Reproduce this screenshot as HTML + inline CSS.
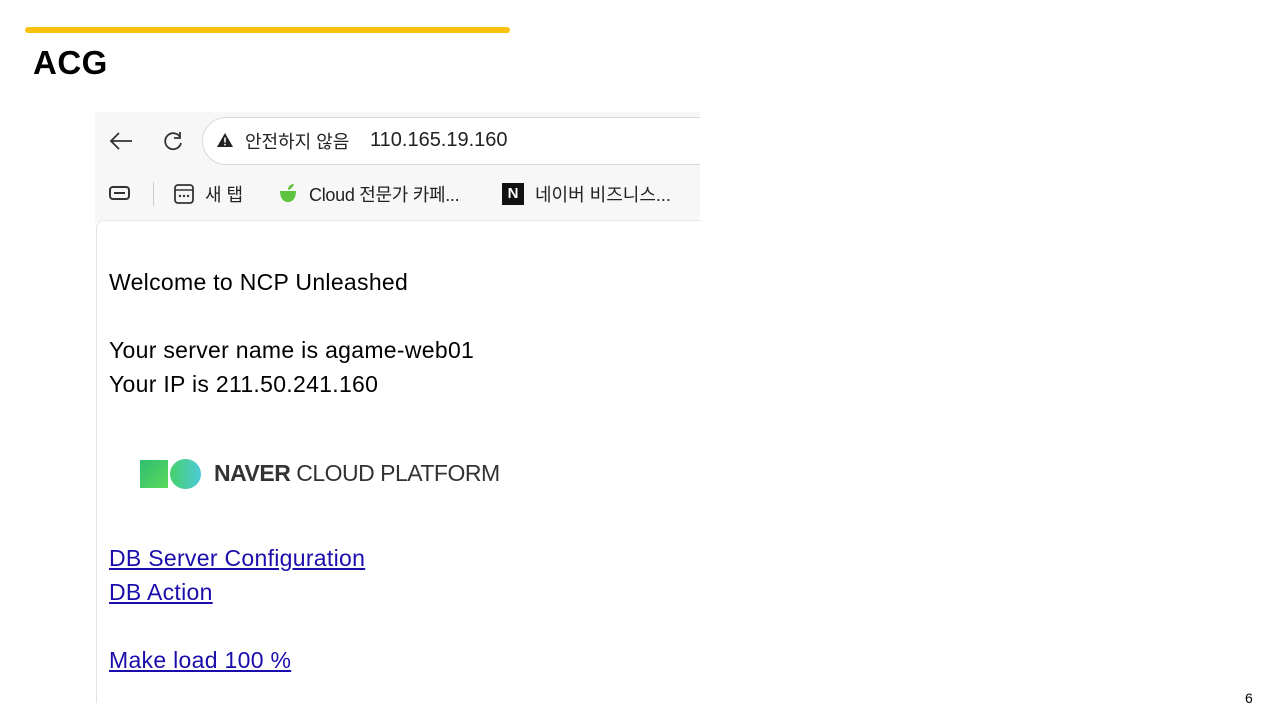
<!DOCTYPE html>
<html><head><meta charset="utf-8"><style>
body{margin:0;width:1280px;height:720px;background:#fff;position:relative;overflow:hidden;font-family:"Liberation Sans","Noto Sans CJK KR",sans-serif;}
.a{position:absolute;}
.t{font-size:23px;letter-spacing:0.3px;color:#000;white-space:nowrap;}
a{color:#1a0dab;text-decoration:underline;}
</style></head><body>
<div class="a" style="left:25px;top:27px;width:485px;height:6px;background:#f9c20f;border-radius:3px"></div>
<div class="a" style="left:33px;top:44px;font-size:33px;font-weight:bold;letter-spacing:0.5px">ACG</div>

<div class="a" style="left:95px;top:112px;width:605px;height:110px;background:#f7f7f7;overflow:hidden">
<div class="a" style="left:107px;top:5px;width:560px;height:46px;border:1px solid #d9d9d9;border-radius:24px;background:#fff"></div>
</div>
<div class="a" style="left:96px;top:220px;width:604px;height:482px;background:#fff;border-left:1px solid #e2e2e2;border-top:1px solid #e8e8e8;border-top-left-radius:8px"></div>

<svg class="a" style="left:108px;top:130px" width="26" height="22" viewBox="0 0 26 22"><path d="M24 11H3M11 3L3 11l8 8" fill="none" stroke="#333" stroke-width="1.8"/></svg>
<svg class="a" style="left:162px;top:130px" width="22" height="22" viewBox="0 0 22 22"><path d="M18 7A8 8 0 1 0 19 13" fill="none" stroke="#333" stroke-width="1.8"/><path d="M18 2v6h-6" fill="none" stroke="#333" stroke-width="1.8"/></svg>
<svg class="a" style="left:216px;top:132px" width="18" height="16" viewBox="0 0 18 16"><path d="M9 1L17 15H1z" fill="#222"/><rect x="8.2" y="5.5" width="1.6" height="5" fill="#fff"/><rect x="8.2" y="11.8" width="1.6" height="1.6" fill="#fff"/></svg>
<div class="a" style="left:245px;top:128px;font-size:18px;color:#222">안전하지 않음</div>
<div class="a" style="left:370px;top:129px;font-size:20px;color:#222">110.165.19.160</div>

<svg class="a" style="left:108px;top:184px" width="24" height="20" viewBox="0 0 24 20"><rect x="2" y="3" width="19" height="12" rx="3" fill="none" stroke="#333" stroke-width="2"/><path d="M6 9h11" stroke="#333" stroke-width="2"/></svg>
<div class="a" style="left:153px;top:182px;width:1px;height:24px;background:#ccc"></div>
<svg class="a" style="left:173px;top:183px" width="22" height="22" viewBox="0 0 22 22"><rect x="2" y="2" width="18" height="18" rx="3" fill="none" stroke="#333" stroke-width="1.8"/><path d="M2 7h18" stroke="#333" stroke-width="1.6"/><circle cx="7" cy="13" r="1.2" fill="#333"/><circle cx="11" cy="13" r="1.2" fill="#333"/><circle cx="15" cy="13" r="1.2" fill="#333"/></svg>
<div class="a" style="left:205px;top:181px;font-size:18px;color:#222">새 탭</div>
<svg class="a" style="left:277px;top:182px" width="24" height="24" viewBox="0 0 24 24"><path d="M3 9h16c0 7-3 11-8 11S3 16 3 9z" fill="#5cc23f"/><path d="M11 8c0-4 3-6 6-6-1 3-3 5-6 6z" fill="#5cc23f"/></svg>
<div class="a" style="left:309px;top:181px;font-size:18px;color:#222;letter-spacing:-0.3px">Cloud 전문가 카페...</div>
<div class="a" style="left:502px;top:183px;width:22px;height:22px;background:#111;color:#fff;font-weight:bold;font-size:15px;text-align:center;line-height:22px">N</div>
<div class="a" style="left:535px;top:181px;font-size:18px;color:#222">네이버 비즈니스...</div>

<div class="a t" style="left:109px;top:269px">Welcome to NCP Unleashed</div>
<div class="a t" style="left:109px;top:337px">Your server name is agame-web01</div>
<div class="a t" style="left:109px;top:371px">Your IP is 211.50.241.160</div>

<div class="a" style="left:140px;top:460px;width:28px;height:28px;background:linear-gradient(135deg,#2fbf71,#5ad85a)"></div>
<div class="a" style="left:170px;top:459px;width:31px;height:30px;border-radius:50%;background:linear-gradient(90deg,#47d06a,#4cc9d9)"></div>
<div class="a" style="left:214px;top:460px;font-size:23px;color:#333;white-space:nowrap;letter-spacing:-0.5px"><b style="font-weight:900">NAVER</b> CLOUD PLATFORM</div>

<div class="a t" style="left:109px;top:545px"><a>DB Server Configuration</a></div>
<div class="a t" style="left:109px;top:579px"><a>DB Action</a></div>
<div class="a t" style="left:109px;top:647px"><a>Make load 100 %</a></div>

<div class="a" style="left:1245px;top:690px;font-size:14px;color:#000">6</div>
</body></html>
